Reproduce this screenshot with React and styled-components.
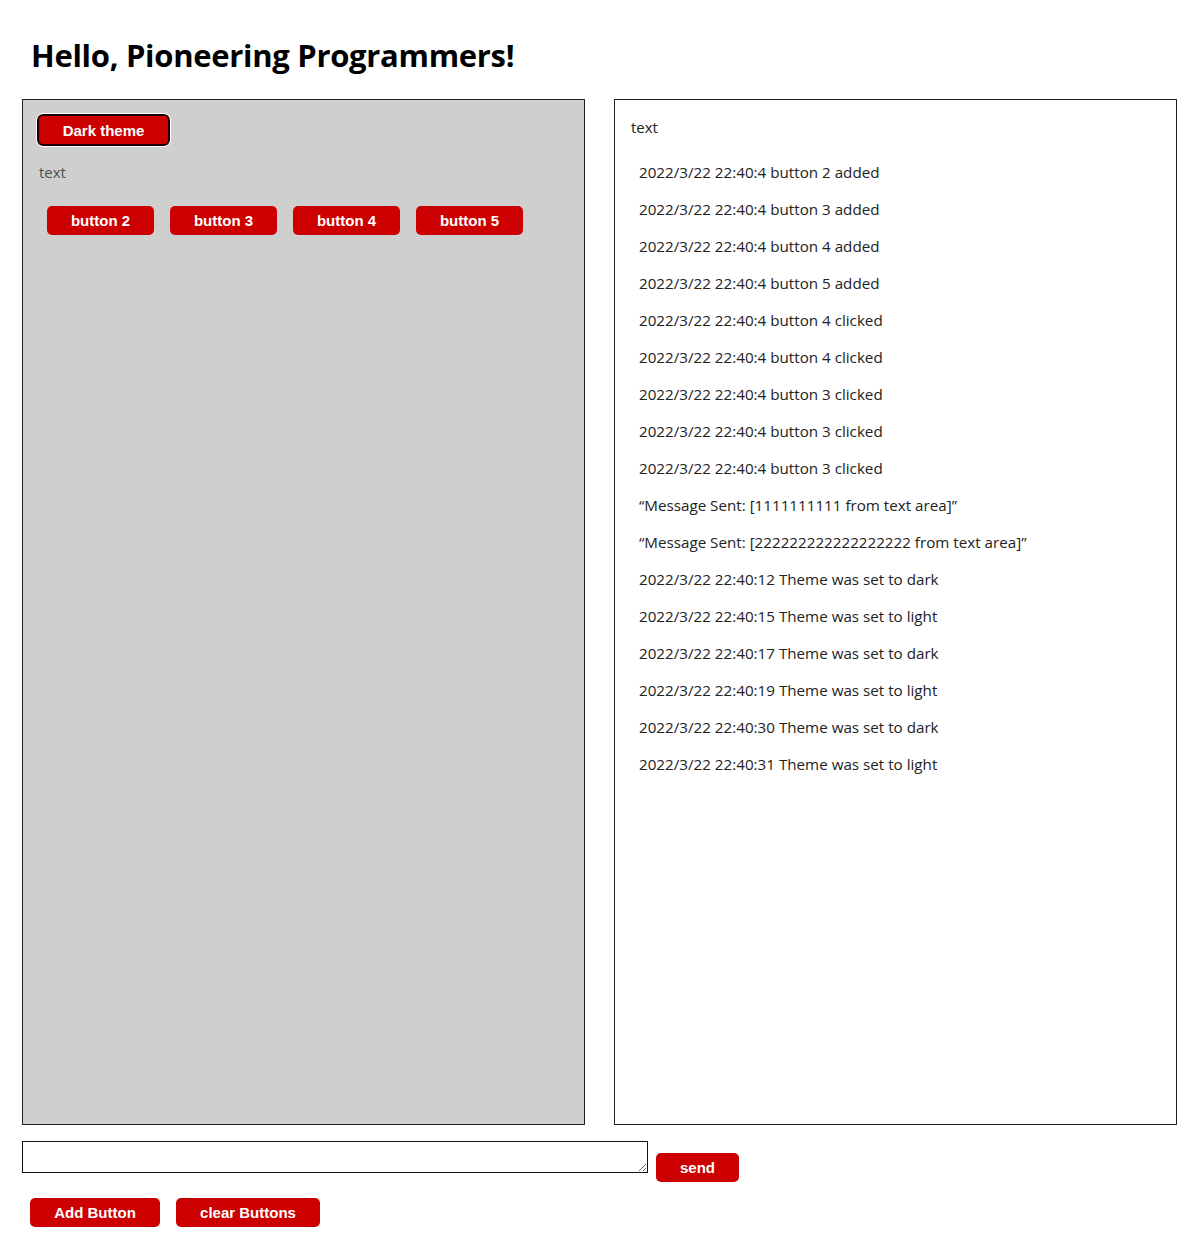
import React from "react"
import styled, { createGlobalStyle } from "styled-components"

const GlobalStyle = createGlobalStyle`
  body {
    margin: 0;
    background: #fff;
    font-family: "Open Sans", "Noto Sans", sans-serif;
  }
`

const Page = styled.div`
  padding: 0 10px 0 22px;
`

const Title = styled.h1`
  margin: 0;
  padding: 35px 0 23px 9px;
  font-size: 31px;
  font-weight: 700;
  color: #000;
  line-height: 41px;
  letter-spacing: -0.3px;
`

const Panels = styled.div`
  display: flex;
  gap: 29px;
`

const Panel = styled.div`
  width: 563px;
  height: 1026px;
  box-sizing: border-box;
  border: 1px solid #222;
  background: ${p => (p.$grey ? "#cfcfcf" : "#fff")};
`

const Controls = styled.div`
  padding: 14px 0 0 14px;
`

const RedButton = styled.button`
  background: #cc0000;
  color: #fff;
  font-family: "Liberation Sans", Arial, sans-serif;
  font-weight: 700;
  font-size: 15px;
  border: none;
  border-radius: 5px;
  height: ${p => p.$h || 29}px;
  width: ${p => p.$w}px;
  padding: 0;
  cursor: pointer;
`

const ThemeButton = styled(RedButton)`
  border: 2px solid #1a0000;
  outline: 1px solid #fff;
  border-radius: 6px;
  width: 133px;
  height: 32px;
`

const Hint = styled.div`
  color: #4a5050;
  font-size: 15px;
  margin: 16px 0 0 2px;
`

const ButtonGrid = styled.div`
  display: flex;
  gap: 16px;
  margin: 24px 0 0 10px;
`

const Log = styled.div`
  padding: 15px 0 0 16px;
  color: #222;
`

const LogTitle = styled.div`
  font-size: 15px;
  line-height: 24px;
  margin-bottom: 21px;
`

const LogLine = styled.div`
  font-size: 15.2px;
  line-height: 37px;
  margin-left: 8px;
  margin-top: -6px;
  margin-bottom: 6px;
`

const SendRow = styled.div`
  display: flex;
  align-items: flex-start;
  gap: 8px;
  margin-top: 16px;
`

const TextBox = styled.textarea`
  width: 626px;
  height: 32px;
  box-sizing: border-box;
  border: 1px solid #111;
  margin: 0;
  resize: both;
  overflow-y: scroll;
`

const SendButton = styled(RedButton)`
  margin-top: 12px;
`

const Footer = styled.div`
  display: flex;
  gap: 16px;
  margin: 16px 0 0 8px;
`

const logs = [
  "2022/3/22 22:40:4 button 2 added",
  "2022/3/22 22:40:4 button 3 added",
  "2022/3/22 22:40:4 button 4 added",
  "2022/3/22 22:40:4 button 5 added",
  "2022/3/22 22:40:4 button 4 clicked",
  "2022/3/22 22:40:4 button 4 clicked",
  "2022/3/22 22:40:4 button 3 clicked",
  "2022/3/22 22:40:4 button 3 clicked",
  "2022/3/22 22:40:4 button 3 clicked",
  "\u201cMessage Sent: [1111111111 from text area]\u201d",
  "\u201cMessage Sent: [222222222222222222 from text area]\u201d",
  "2022/3/22 22:40:12 Theme was set to dark",
  "2022/3/22 22:40:15 Theme was set to light",
  "2022/3/22 22:40:17 Theme was set to dark",
  "2022/3/22 22:40:19 Theme was set to light",
  "2022/3/22 22:40:30 Theme was set to dark",
  "2022/3/22 22:40:31 Theme was set to light",
]

export default function App() {
  return (
    <>
      <GlobalStyle />
      <Page>
        <Title>Hello, Pioneering Programmers!</Title>
        <Panels>
          <Panel $grey>
            <Controls>
              <ThemeButton>Dark theme</ThemeButton>
              <Hint>text</Hint>
              <ButtonGrid>
                {[2, 3, 4, 5].map(n => (
                  <RedButton key={n} $w={107}>
                    button {n}
                  </RedButton>
                ))}
              </ButtonGrid>
            </Controls>
          </Panel>
          <Panel>
            <Log>
              <LogTitle>text</LogTitle>
              {logs.map((l, i) => (
                <LogLine key={i}>{l}</LogLine>
              ))}
            </Log>
          </Panel>
        </Panels>
        <SendRow>
          <TextBox />
          <SendButton $w={83}>send</SendButton>
        </SendRow>
        <Footer>
          <RedButton $w={130}>Add Button</RedButton>
          <RedButton $w={144}>clear Buttons</RedButton>
        </Footer>
      </Page>
    </>
  )
}
